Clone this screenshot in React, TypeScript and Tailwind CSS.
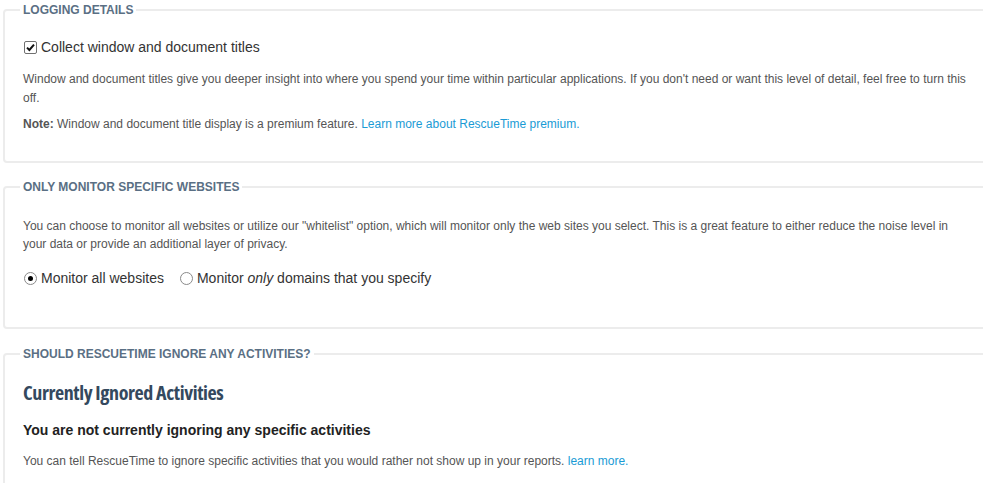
import React from 'react';

function Section({ title, children, className = '' }: { title: string; children: React.ReactNode; className?: string }) {
  return (
    <fieldset className={`ml-[3px] w-[1010px] rounded-[4px] border-2 border-[#ececec] pl-[18px] pr-[40px] ${className}`}>
      <legend className="-ml-[3px] px-[3px] text-[12px] leading-[14px] font-bold uppercase text-[#5a6f84]">
        {title}
      </legend>
      {children}
    </fieldset>
  );
}

function CheckBox() {
  return (
    <span className="inline-flex h-[13px] w-[13px] items-center justify-center rounded-[2px] border border-[#707070] bg-white">
      <svg width="11" height="11" viewBox="0 0 11 11">
        <path d="M2 5.6 L4.4 8 L9 2.6" fill="none" stroke="#111" strokeWidth="2" />
      </svg>
    </span>
  );
}

function Radio({ on }: { on?: boolean }) {
  return (
    <span className="inline-flex h-[13px] w-[13px] items-center justify-center rounded-full border border-[#8a8a8a] bg-white">
      {on && <span className="h-[5px] w-[5px] rounded-full bg-black" />}
    </span>
  );
}

export default function App() {
  return (
    <div className="min-h-[483px] overflow-hidden bg-white font-['Liberation_Sans',Arial,sans-serif] text-[#555]">
      <Section title="Logging Details" className="mt-[3px] pt-[20px] pb-[27px]">
        <label className="flex h-[20px] items-center gap-[4px] pl-[1px] text-[14px] text-[#333]">
          <CheckBox />
          <span>Collect window and document titles</span>
        </label>
        <p className="mt-[13px] w-[945px] text-[12px] leading-[19px]">
          Window and document titles give you deeper insight into where you spend your time within particular applications. If you don't need or want this level of detail, feel free to turn this off.
        </p>
        <p className="mt-[7px] text-[12px] leading-[19px]">
          <span className="font-bold">Note:</span> Window and document title display is a premium feature.{' '}
          <a className="text-[#1a9bd5]">Learn more about RescueTime premium.</a>
        </p>
      </Section>

      <Section title="Only Monitor Specific Websites" className="mt-[17px] pt-[23px] pb-[39px]">
        <p className="w-[945px] text-[12px] leading-[18px]">
          You can choose to monitor all websites or utilize our "whitelist" option, which will monitor only the web sites you select. This is a great feature to either reduce the noise level in your data or provide an additional layer of privacy.
        </p>
        <div className="mt-[15px] flex h-[20px] items-center text-[14px] text-[#333]">
          <label className="flex items-center gap-[4px] pl-[1px]">
            <Radio on />
            <span>Monitor all websites</span>
          </label>
          <label className="ml-[16px] flex items-center gap-[4px]">
            <Radio />
            <span>
              Monitor <em>only</em> domains that you specify
            </span>
          </label>
        </div>
      </Section>

      <Section title="Should RescueTime ignore any activities?" className="mt-[18px] pt-[20px] pb-[40px]">
        <h2 className="font-['Open_Sans',sans-serif] text-[20px] leading-[24px] font-bold tracking-[-0.4px] text-[#34495e] [font-stretch:75%]">
          Currently Ignored Activities
        </h2>
        <h3 className="mt-[15px] text-[14px] leading-[20px] font-bold text-[#222]">
          You are not currently ignoring any specific activities
        </h3>
        <p className="mt-[12px] text-[12px] leading-[19px]">
          You can tell RescueTime to ignore specific activities that you would rather not show up in your reports.{' '}
          <a className="text-[#1a9bd5]">learn more.</a>
        </p>
      </Section>
    </div>
  );
}
